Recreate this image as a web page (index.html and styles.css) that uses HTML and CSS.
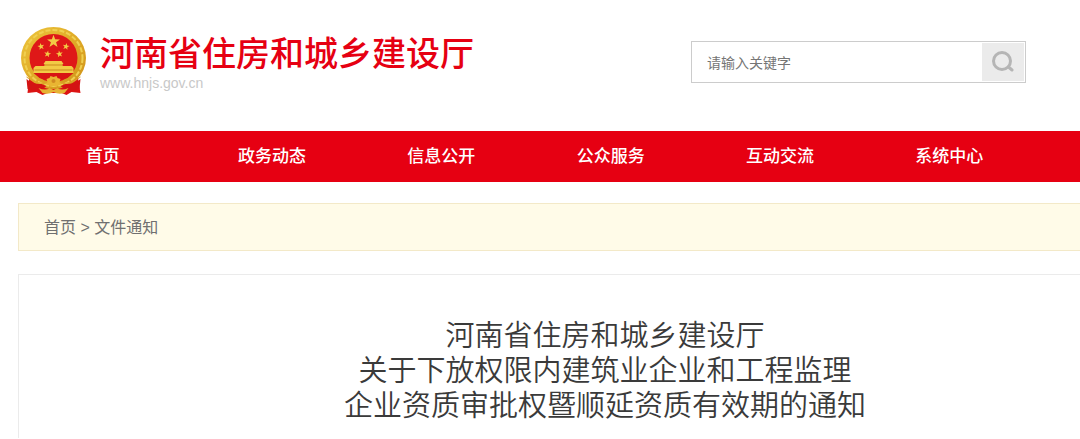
FILE: index.html
```html
<!DOCTYPE html>
<html lang="zh-CN">
<head>
<meta charset="utf-8">
<title>河南省住房和城乡建设厅</title>
<link rel="stylesheet" href="styles.css">
</head>
<body>
<header class="header">
  <div class="brand">
    <svg class="emblem" viewBox="0 0 66 70" aria-hidden="true">
      <defs>
        <path id="star" d="M0-10 2.4-3.2 9.5-3.1 3.8 1.2 5.9 8.1 0 4-5.9 8.1-3.8 1.2-9.5-3.1-2.4-3.2z"/>
        <linearGradient id="gold" x1="0" y1="0" x2="1" y2="1">
          <stop offset="0" stop-color="#edc63e"/><stop offset=".5" stop-color="#e0ab27"/><stop offset="1" stop-color="#cf9219"/>
        </linearGradient>
      </defs>
      <path d="M9 49 7 67l9-1 6 3 5-2h14l5 2 5-3 9 1-3-18z" fill="#dc1414"/>
      <ellipse cx="33" cy="32" rx="32.500" ry="31" fill="url(#gold)"/>
      <ellipse cx="33" cy="32" rx="29" ry="28" fill="none" stroke="#f0d050" stroke-width="2" stroke-dasharray="5 2"/>
      <ellipse cx="33" cy="32" rx="24" ry="24" fill="#df1818"/>
      <g fill="#f2cb45">
        <use href="#star" transform="translate(33 15.500) scale(.68)"/>
        <use href="#star" transform="translate(20.500 20.500) scale(.36) rotate(-12)"/>
        <use href="#star" transform="translate(45.500 20.500) scale(.36) rotate(12)"/>
        <use href="#star" transform="translate(27 28) scale(.36) rotate(10)"/>
        <use href="#star" transform="translate(39 28) scale(.36) rotate(-10)"/>
        <path d="M25 35h16l2 3H23zM24 38h18v3H24zM13 42l2-2h36l2 2v5H13z"/>
      </g>
      <path d="M24 39h18M14 44h38" stroke="#c98b1c" stroke-width="1"/>
      <path d="M13 47h40l-6 5q-14 5-28 0z" fill="#d81414"/>
      <path d="M6 53q5 5 15 5l5 2-5 4q-8 1-14-1zM60 53q-5 5-15 5l-5 2 5 4q8 1 14-1z" fill="#d41313"/>
      <path d="M6 51q10 8 21 6M60 51q-10 8-21 6" fill="none" stroke="#dda52c" stroke-width="1"/>
      <path d="M26 53l3-1 1-2 3 1 3-1 1 2 3 1-1 3 2 2-3 1-2 2-3-1-3 1-2-2-3-1 2-2z" fill="#e9b532"/>
      <circle cx="33" cy="55" r="2" fill="#d18a20"/>
      <path d="M18 62q7 3 11 0l4 2 4-2q4 3 11 0l-4 5q-6 2-11-1-5 3-11 1z" fill="#e6b334"/>
    </svg>
    <div class="brand-text">
      <a class="site-name" href="#">河南省住房和城乡建设厅</a>
      <span class="site-url">www.hnjs.gov.cn</span>
    </div>
  </div>
  <form class="search" role="search">
    <input class="search-input" type="text" aria-label="请输入关键字" placeholder="请输入关键字">
    <button class="search-button" type="button" aria-label="搜索">
      <svg class="search-icon" viewBox="0 0 22 22" aria-hidden="true"><circle cx="10" cy="10" r="8.500"/><path d="m16.500 16 3.500 3"/></svg>
    </button>
  </form>
</header>
<nav class="nav">
  <a class="nav-link" href="#">首页</a>
  <a class="nav-link" href="#">政务动态</a>
  <a class="nav-link" href="#">信息公开</a>
  <a class="nav-link" href="#">公众服务</a>
  <a class="nav-link" href="#">互动交流</a>
  <a class="nav-link" href="#">系统中心</a>
</nav>
<main class="content">
  <div class="breadcrumb"><a class="crumb" href="#">首页</a> &gt; <a class="crumb" href="#">文件通知</a></div>
  <article class="article">
    <h1 class="title">河南省住房和城乡建设厅<br>关于下放权限内建筑业企业和工程监理<br>企业资质审批权暨顺延资质有效期的通知</h1>
  </article>
</main>
</body>
</html>
```
FILE: styles.css
```css
* { box-sizing: border-box; }
body {
  margin: 0;
  background: #fff;
  font-family: "Liberation Sans", "Noto Sans CJK SC", sans-serif;
}
a { color: inherit; text-decoration: none; }
.header {
  display: flex;
  justify-content: space-between;
  align-items: flex-start;
  padding: 26px 54px 35px 20px;
}
.brand { display: flex; gap: 13px; }
.emblem { width: 67px; height: 70px; }
.brand-text { display: flex; flex-direction: column; padding-top: 7px; }
.site-name {
  color: #e60012;
  font-size: 34px;
  font-weight: 500;
  line-height: 42px;
  white-space: nowrap;
}
.site-url { color: #c8c8c8; font-size: 14px; line-height: 16px; }
.search {
  display: flex;
  width: 335px;
  height: 42px;
  margin-top: 15px;
  padding: 1px;
  border: 1px solid #ccc;
}
.search-input {
  flex: 1;
  min-width: 0;
  padding: 1px 14px 0;
  border: 0;
  background: transparent;
  font: inherit;
  font-size: 14px;
  color: #666;
}
.search-input::placeholder { color: #757575; }
.search-button {
  display: flex;
  align-items: center;
  justify-content: center;
  width: 42px;
  padding: 0;
  border: 0;
  background: #ebebeb;
}
.search-icon {
  width: 22px;
  height: 22px;
  fill: none;
  stroke: #b5b5b5;
  stroke-width: 3;
  stroke-linecap: round;
}
.nav {
  display: flex;
  padding: 0 46px 0 18px;
  background: #e60012;
}
.nav-link {
  flex: 1;
  color: #fff;
  font-size: 17px;
  font-weight: 500;
  line-height: 51px;
  text-align: center;
}
.content { margin: 21px 0 0 18px; }
.breadcrumb {
  padding: 1px 25px 0;
  border: 1px solid #f3e9c8;
  border-right: 0;
  background: #fffbe8;
  color: #707070;
  font-size: 16px;
  line-height: 45px;
}
.article {
  margin-top: 23px;
  padding: 44px 0 14px 111px;
  border: 1px solid #ebebeb;
  border-width: 1px 0 0 1px;
}
.title {
  margin: 0;
  color: #3a3a3a;
  font-size: 29px;
  font-weight: 350;
  line-height: 35px;
  text-align: center;
}
```
